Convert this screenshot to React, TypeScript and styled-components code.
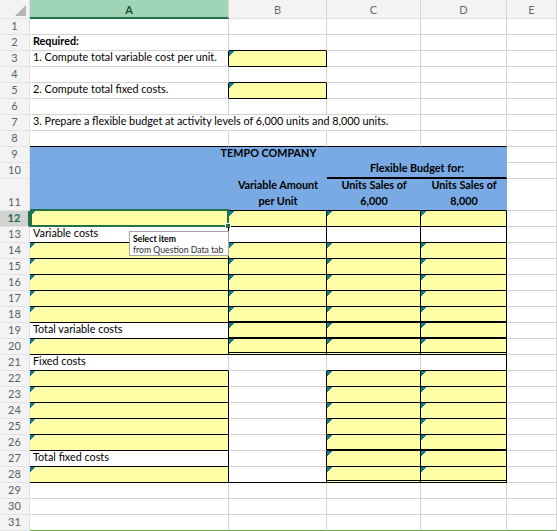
import React from 'react'
import styled, { createGlobalStyle, css } from 'styled-components'

const GRID = '#d4d4d4'
const INPUT = '#ffffa8'
const BLUE = '#79aae3'
const TEAL = '#127f8c'
const EXCEL_GREEN = '#217346'
const HEAD_BG = '#f3f3f3'
const BLACK = '1px solid #000'

const COLS = ['A', 'B', 'C', 'D', 'E']
const ROW_COUNT = 31

const GlobalStyle = createGlobalStyle`
  *, *::before, *::after { box-sizing: border-box; }
  html, body { margin: 0; padding: 0; background: #fff; }
  body {
    font-family: Lato, 'Liberation Sans', sans-serif;
    color: #000;
    overflow: hidden;
  }
`

const Sheet = styled.div`
  display: grid;
  grid-template-columns: 30px 199px 98px 94px 86px 1fr;
  grid-template-rows: 19px repeat(10, 16px) 32px repeat(20, 16px);
  width: 557px;
  height: 531px;
  overflow: hidden;
  font-size: 10.8px;
`

const Corner = styled.div`
  display: flex;
  justify-content: flex-end;
  align-items: flex-end;
  padding: 0 3px 2px 0;
  background: ${HEAD_BG};
  border-right: 1px solid #e0e0e0;
  border-bottom: 1px solid #e0e0e0;
`

const CornerMark = styled.span`
  width: 0;
  height: 0;
  border-left: 11px solid transparent;
  border-bottom: 11px solid #b5b5b5;
`

const ColHead = styled.div<{ $active?: boolean }>`
  display: flex;
  align-items: center;
  justify-content: center;
  padding-top: 1px;
  font-size: 11px;
  background: ${(p) => (p.$active ? '#9fd5b7' : HEAD_BG)};
  color: ${(p) => (p.$active ? '#1b4f31' : '#6b6b6b')};
  font-weight: ${(p) => (p.$active ? 700 : 400)};
  border-right: 1px solid #d5d5d5;
  border-bottom: ${(p) => (p.$active ? `2px solid ${EXCEL_GREEN}` : '1px solid #e0e0e0')};
`

const RowHead = styled.div<{ $active?: boolean }>`
  display: flex;
  align-items: flex-end;
  justify-content: center;
  padding-bottom: 1px;
  font-size: 11px;
  line-height: 14px;
  background: ${(p) => (p.$active ? '#d2d2d2' : HEAD_BG)};
  color: ${(p) => (p.$active ? EXCEL_GREEN : '#5f5f5f')};
  font-weight: ${(p) => (p.$active ? 700 : 400)};
  border-right: ${(p) => (p.$active ? `2px solid ${EXCEL_GREEN}` : '1px solid #e0e0e0')};
  border-bottom: 1px solid #e4e4e4;
`

interface CellProps {
  $span: number
  $fill: string
  $right: string
  $bottom: string
  $center: boolean
  $bold: boolean
  $input: boolean
  $anchor: boolean
}

const Cell = styled.div<CellProps>`
  grid-column: span ${(p) => p.$span};
  display: flex;
  flex-direction: column;
  justify-content: flex-end;
  align-items: ${(p) => (p.$center ? 'center' : 'flex-start')};
  padding: 0 2px 1px 3px;
  min-width: 0;
  white-space: nowrap;
  line-height: 14px;
  background-color: ${(p) => p.$fill};
  border-right: ${(p) => p.$right};
  border-bottom: ${(p) => p.$bottom};
  font-weight: ${(p) => (p.$bold ? 700 : 400)};
  ${(p) =>
    p.$input &&
    css`
      background-image: linear-gradient(to bottom right, ${TEAL} 50%, transparent 50%);
      background-size: 6px 5px;
      background-repeat: no-repeat;
    `}
  ${(p) => p.$anchor && 'position: relative;'}
`

const Line = styled.span`
  line-height: 16px;
`

const Selection = styled.div`
  position: absolute;
  top: -2px;
  left: 0;
  right: -1px;
  bottom: -1px;
  border: 2px solid ${EXCEL_GREEN};
  pointer-events: none;
`

const FillHandle = styled.span`
  position: absolute;
  right: -4px;
  bottom: -4px;
  width: 6px;
  height: 6px;
  background: ${EXCEL_GREEN};
  border: 1px solid #fff;
`

const Tip = styled.div`
  position: absolute;
  left: 99px;
  top: 4px;
  width: 100px;
  height: 25px;
  padding: 1px 3px;
  background: #fff;
  border: 1px solid #a6a6a6;
  font-size: 8.7px;
  line-height: 11px;
  font-weight: 400;
  color: #303030;
  z-index: 5;
`

const TipTitle = styled.div`
  font-weight: 700;
  color: #000;
`

const key = (c: number, r: number) => `${COLS[c]}${r}`

const expand = (ref: string): string[] => {
  const [from, to = from] = ref.split(':')
  const c1 = COLS.indexOf(from[0])
  const r1 = Number(from.slice(1))
  const c2 = COLS.indexOf(to[0])
  const r2 = Number(to.slice(1))
  const out: string[] = []
  for (let r = r1; r <= r2; r++) for (let c = c1; c <= c2; c++) out.push(key(c, r))
  return out
}

const cellSet = (refs: string[]) => new Set(refs.flatMap(expand))

const cellMap = (entries: [string[], string][]) => {
  const map: Record<string, string> = {}
  entries.forEach(([refs, value]) => refs.flatMap(expand).forEach((k) => (map[k] = value)))
  return map
}

const INPUTS = cellSet([
  'B3', 'B5', 'A12:D12', 'A14:D18', 'B19:D19', 'A20:D20',
  'A22:A26', 'C22:D26', 'C27:D27', 'A28', 'C28:D28',
])
const BOXED = new Set([...INPUTS, ...cellSet(['B13:D13', 'A19', 'A27'])])

const MERGES: Record<string, number> = { A9: 4, C10: 2 }
const COVERED = cellSet(['B9:D9', 'D10'])

const BOTTOM = cellMap([
  [['A8:D8', 'B28'], BLACK],
  [['C10', 'B18:D18', 'B19:D19', 'C26:D26'], '2px solid #000'],
  [['B20:D20', 'C28:D28'], '3px double #000'],
  [['A31:E31'], '1px solid #6aa84f'],
])
const RIGHT = cellMap([[['D21'], BLACK]])
const SPILL = cellSet(['A7', 'B7'])

interface TextDef {
  lines: string[]
  bold?: boolean
  center?: boolean
}

const TEXT: Record<string, TextDef> = {
  A2: { lines: ['Required:'], bold: true },
  A3: { lines: ['1. Compute total variable cost per unit.'] },
  A5: { lines: ['2. Compute total fixed costs.'] },
  A7: { lines: ['3. Prepare a flexible budget at activity levels of 6,000 units and 8,000 units.'] },
  A9: { lines: ['TEMPO COMPANY'], bold: true, center: true },
  C10: { lines: ['Flexible Budget for:'], bold: true, center: true },
  B11: { lines: ['Variable Amount', 'per Unit'], bold: true, center: true },
  C11: { lines: ['Units Sales of', '6,000'], bold: true, center: true },
  D11: { lines: ['Units Sales of', '8,000'], bold: true, center: true },
  A13: { lines: ['Variable costs'] },
  A19: { lines: ['Total variable costs'] },
  A21: { lines: ['Fixed costs'] },
  A27: { lines: ['Total fixed costs'] },
}

const isBoxed = (c: number, r: number) => BOXED.has(key(c, r))
const isBlue = (c: number, r: number) => r >= 9 && r <= 11 && c <= 3

const rightBorder = (c: number, r: number, last: number) => {
  const k = key(c, r)
  if (RIGHT[k]) return RIGHT[k]
  if (SPILL.has(k)) return '1px solid transparent'
  if (isBoxed(last, r) || isBoxed(last + 1, r)) return BLACK
  if (isBlue(last, r)) return `1px solid ${BLUE}`
  return `1px solid ${GRID}`
}

const bottomBorder = (c: number, r: number) => {
  const k = key(c, r)
  if (BOTTOM[k]) return BOTTOM[k]
  if (isBoxed(c, r) || isBoxed(c, r + 1)) return BLACK
  if (isBlue(c, r)) return `1px solid ${BLUE}`
  return `1px solid ${GRID}`
}

const fillFor = (c: number, r: number) => {
  if (INPUTS.has(key(c, r))) return INPUT
  if (isBlue(c, r)) return BLUE
  return 'transparent'
}

const renderRow = (r: number) => {
  const out: React.ReactNode[] = [
    <RowHead key={`h${r}`} $active={r === 12}>
      {r}
    </RowHead>,
  ]
  COLS.forEach((_, c) => {
    const k = key(c, r)
    if (COVERED.has(k)) return
    const span = MERGES[k] ?? 1
    const text = TEXT[k]
    out.push(
      <Cell
        key={k}
        $span={span}
        $fill={fillFor(c, r)}
        $right={rightBorder(c, r, c + span - 1)}
        $bottom={bottomBorder(c, r)}
        $center={!!text?.center}
        $bold={!!text?.bold}
        $input={INPUTS.has(k)}
        $anchor={k === 'A12' || k === 'A13'}
      >
        {text?.lines.map((line) => <Line key={line}>{line}</Line>)}
        {k === 'A12' && (
          <Selection>
            <FillHandle />
          </Selection>
        )}
        {k === 'A13' && (
          <Tip>
            <TipTitle>Select item</TipTitle>
            from Question Data tab
          </Tip>
        )}
      </Cell>
    )
  })
  return out
}

export default function App() {
  const rows: React.ReactNode[] = []
  for (let r = 1; r <= ROW_COUNT; r++) rows.push(...renderRow(r))

  return (
    <>
      <GlobalStyle />
      <Sheet>
        <Corner>
          <CornerMark />
        </Corner>
        {COLS.map((col) => (
          <ColHead key={col} $active={col === 'A'}>
            {col}
          </ColHead>
        ))}
        {rows}
      </Sheet>
    </>
  )
}
